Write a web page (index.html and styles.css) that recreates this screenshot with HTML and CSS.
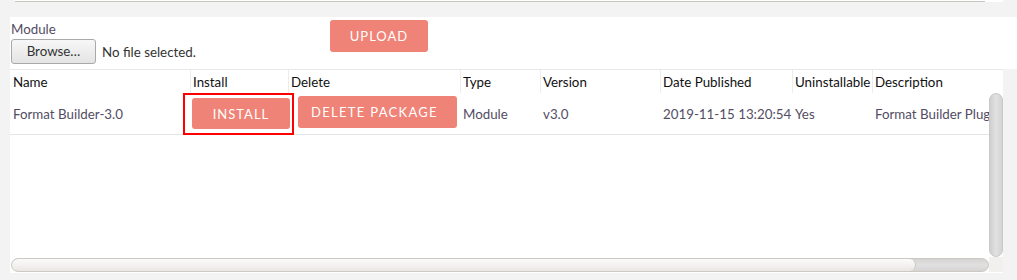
FILE: index.html
```html
<!DOCTYPE html>
<html>
<head>
<meta charset="utf-8">
<link rel="stylesheet" href="styles.css">
</head>
<body>
<div class="top-strip"><div class="strip-bar"></div><div class="strip-corner"></div></div>

<section class="upload-form">
  <div class="field">
    <div class="field-label">Module</div>
    <div class="file-input"><span class="browse-btn">Browse…</span><span class="file-name">No file selected.</span></div>
  </div>
  <button class="btn upload-btn">UPLOAD</button>
</section>

<section class="table-wrap">
  <div class="thead cols">
    <div class="th">Name</div>
    <div class="th">Install</div>
    <div class="th">Delete</div>
    <div class="th">Type</div>
    <div class="th">Version</div>
    <div class="th">Date Published</div>
    <div class="th">Uninstallable</div>
    <div class="th">Description</div>
  </div>
  <div class="body-area">
    <div class="tbody">
      <div class="tr cols">
        <div class="td">Format Builder-3.0</div>
        <div class="td td-install"><button class="btn install-btn">INSTALL</button></div>
        <div class="td td-delete"><button class="btn delete-btn">DELETE PACKAGE</button></div>
        <div class="td">Module</div>
        <div class="td">v3.0</div>
        <div class="td">2019-11-15 13:20:54</div>
        <div class="td">Yes</div>
        <div class="td">Format Builder Plugin</div>
      </div>
    </div>
    <div class="vscroll"><div class="vthumb"></div></div>
  </div>
  <div class="hscroll-row">
    <div class="htrack"><div class="hthumb"></div></div>
    <div class="corner"></div>
  </div>
</section>
</body>
</html>
```

FILE: styles.css
```css
html, body {
  margin: 0;
  padding: 0;
}
body {
  background: #f3f3f3;
  font-family: Lato, "Open Sans", sans-serif;
  font-size: 13.33px;
  color: #534d64;
  width: 1017px;
  height: 280px;
  overflow: hidden;
}

.top-strip {
  display: flex;
  margin-left: 15px;
  width: 988px;
  height: 2px;
}
.strip-bar {
  flex: 1;
  background: #fff;
  border-bottom: 1px solid #c9c5bf;
  box-sizing: border-box;
}
.strip-corner {
  width: 18px;
  background: #fff;
}

.upload-form {
  margin-top: 15px;
  margin-left: 10px;
  height: 52px;
  background: #fff;
  display: grid;
  grid-template-columns: 319px auto;
  align-items: start;
  padding-left: 1px;
  box-sizing: border-box;
}
.field {
  padding-top: 4px;
}
.field-label {
  line-height: 17px;
  color: #534d64;
}
.file-input {
  display: flex;
  align-items: center;
  margin-top: 1px;
}
.browse-btn {
  box-sizing: border-box;
  width: 85px;
  height: 25px;
  line-height: 23px;
  text-align: center;
  border: 1px solid #a9a9a9;
  border-radius: 3px;
  background: linear-gradient(#f7f7f7, #e4e4e4);
  color: #333;
}
.file-name {
  margin-left: 6px;
  color: #333;
}

.btn {
  font-family: Lato, "Open Sans", sans-serif;
  font-size: 13px;
  letter-spacing: 1px;
  background: #f08377;
  color: #fff;
  border: none;
  border-radius: 3px;
  padding: 0;
  text-align: center;
  cursor: pointer;
}
.upload-btn {
  width: 98px;
  height: 32px;
  margin-top: 3px;
}

.table-wrap {
  margin-left: 10px;
  width: 993px;
  height: 204px;
  background: #fff;
  display: flex;
  flex-direction: column;
}
.cols {
  display: grid;
  grid-template-columns: 180px 98px 172px 80px 120px 132px 80px 1fr;
}
.thead {
  height: 24px;
  border-top: 1px solid #e8e8e8;
  box-sizing: border-box;
}
.th {
  border-left: 1px solid #ececec;
  padding-left: 2px;
  padding-top: 1px;
  line-height: 22px;
  color: #111;
  white-space: nowrap;
  overflow: hidden;
}
.th:first-child {
  border-left: none;
  padding-left: 3px;
}
.body-area {
  display: flex;
  height: 164px;
}
.tbody {
  flex: 1;
  min-width: 0;
}
.tr {
  height: 42px;
  border-bottom: 1px solid #e5e5e5;
  box-sizing: border-box;
}
.td {
  padding-left: 3px;
  padding-top: 1px;
  line-height: 40px;
  white-space: nowrap;
  overflow: hidden;
  color: #534d64;
}
.td-install {
  position: relative;
  overflow: visible;
  display: flex;
  align-items: flex-start;
  padding-left: 2px;
  padding-top: 0;
}
.td-install::after {
  content: "";
  position: absolute;
  left: -7px;
  top: 0;
  width: 111px;
  height: 42px;
  border: 2px solid #f00;
  box-sizing: border-box;
}
.install-btn {
  width: 98px;
  height: 31px;
  margin-top: 5px;
  flex-shrink: 0;
}
.td-delete {
  display: flex;
  align-items: flex-start;
  padding-left: 10px;
  padding-top: 0;
  overflow: visible;
}
.delete-btn {
  width: 159px;
  height: 32px;
  margin-top: 3px;
  flex-shrink: 0;
  text-align: left;
  padding-left: 13px;
  letter-spacing: 1.3px;
}

.vscroll {
  width: 14px;
  background: #fff;
}
.vthumb {
  height: 164px;
  border-radius: 7px;
  border: 1px solid #c9c9c9;
  box-sizing: border-box;
  background: linear-gradient(to right, #cfcfcf, #e1e1e1 50%, #d3d3d3);
}
.hscroll-row {
  display: flex;
  height: 16px;
}
.htrack {
  margin-left: 1px;
  width: 978px;
  height: 14px;
  margin-top: 1px;
  border: 1px solid #cdc8c2;
  border-radius: 7px;
  box-sizing: border-box;
  background: linear-gradient(#d4d4d4, #e0e0e0 50%, #d4d4d4);
  overflow: hidden;
  display: flex;
}
.hthumb {
  width: 904px;
  height: 100%;
  border-radius: 6px;
  border-right: 1px solid #cdc8c2;
  box-sizing: border-box;
  background: linear-gradient(#fbfbfa, #f1f0ee 60%, #e9e7e4);
}
.corner {
  width: 14px;
  height: 15px;
  background: #f1f0ef;
}
```
